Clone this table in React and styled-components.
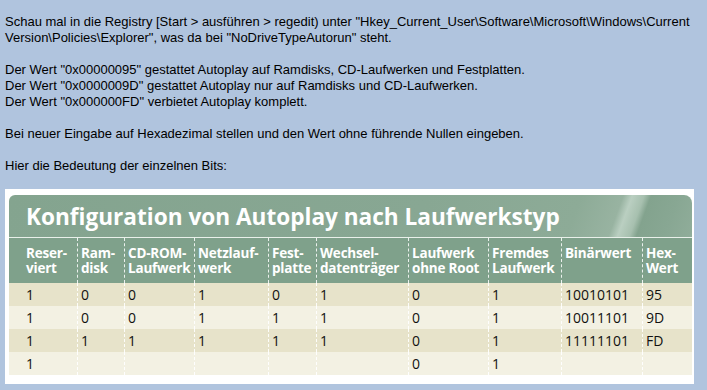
import React from 'react'
import styled, { createGlobalStyle } from 'styled-components'

const GlobalStyle = createGlobalStyle`
    body {
        margin: 0;
        background-color: #b0c4de;
        font-family: "Liberation Sans", Arial, sans-serif;
    }
`

const columns = [
    ['Reser-', 'viert'],
    ['Ram-', 'disk'],
    ['CD-ROM-', 'Laufwerk'],
    ['Netzlauf-', 'werk'],
    ['Fest-', 'platte'],
    ['Wechsel-', 'datenträger'],
    ['Laufwerk', 'ohne Root'],
    ['Fremdes', 'Laufwerk'],
    ['Binärwert', ''],
    ['Hex-', 'Wert'],
]

const rows = [
    ['1', '0', '0', '1', '0', '1', '0', '1', '10010101', '95'],
    ['1', '0', '0', '1', '1', '1', '0', '1', '10011101', '9D'],
    ['1', '1', '1', '1', '1', '1', '0', '1', '11111101', 'FD'],
    ['1', '', '', '', '', '', '0', '1', '', ''],
]

export default function App() {
    return (
        <Page>
            <GlobalStyle />
            <Paragraph>
                Schau mal in die Registry [Start &gt; ausführen &gt; regedit) unter "Hkey_Current_User\Software\Microsoft\Windows\Current
                <br />
                Version\Policies\Explorer", was da bei "NoDriveTypeAutorun" steht.
            </Paragraph>
            <Paragraph>
                Der Wert "0x00000095" gestattet Autoplay auf Ramdisks, CD-Laufwerken und Festplatten.
                <br />
                Der Wert "0x0000009D" gestattet Autoplay nur auf Ramdisks und CD-Laufwerken.
                <br />
                Der Wert "0x000000FD" verbietet Autoplay komplett.
            </Paragraph>
            <Paragraph>Bei neuer Eingabe auf Hexadezimal stellen und den Wert ohne führende Nullen eingeben.</Paragraph>
            <Paragraph>Hier die Bedeutung der einzelnen Bits:</Paragraph>

            <Frame>
                <Panel>
                    <Title>Konfiguration von Autoplay nach Laufwerkstyp</Title>
                    <Grid>
                        {columns.map((c, i) => (
                            <HeadCell key={i} $first={i === 0}>
                                <HeadLine>{c[0]}</HeadLine>
                                <HeadLine>{c[1]}</HeadLine>
                            </HeadCell>
                        ))}
                        {rows.map((r, ri) =>
                            r.map((v, ci) => (
                                <Cell key={ri + '-' + ci} $first={ci === 0} $alt={ri % 2 === 1}>
                                    {v}
                                </Cell>
                            ))
                        )}
                    </Grid>
                </Panel>
            </Frame>
        </Page>
    )
}

const Page = styled.div`
    padding: 14px 0 0 5px;
    width: 702px;
`

const Paragraph = styled.p`
    margin: 0 0 16px;
    font-size: 13px;
    line-height: 16px;
    color: #000;
    white-space: nowrap;
`

const Frame = styled.div`
    margin-top: -1px;
    width: 689px;
    box-sizing: border-box;
    padding: 6px 2px 9px 4px;
    background: #fff;
`

const Panel = styled.div`
    border-radius: 6px 8px 0 0;
    overflow: hidden;
    font-family: "Open Sans", "Noto Sans", sans-serif;
`

// Titelbalken mit dem hellen Lichtstreifen rechts
const Title = styled.div`
    height: 43px;
    box-sizing: border-box;
    padding: 7px 0 0 17px;
    border-bottom: 1px solid #e9f0ea;
    background: linear-gradient(
        110deg,
        #84a48f 0%,
        #88a793 60%,
        #8dab97 82%,
        #98b3a1 88%,
        #bacfc1 89.3%,
        #a7c0af 91%,
        #83a38e 92%,
        #88a793 96%,
        #90ad9a 100%
    );
    color: #fff;
    font-size: 22.6px;
    font-weight: 700;
    line-height: 30px;
`

const Grid = styled.div`
    display: grid;
    grid-template-columns: 68px 47px 70px 74px 48px 92px 80px 73px 81px 1fr;
`

const HeadCell = styled.div`
    height: 45px;
    box-sizing: border-box;
    padding: 8px 0 0 ${(p) => (p.$first ? '17px' : '3px')};
    background: #7fa18b;
    border-left: ${(p) => (p.$first ? 'none' : '1px dashed rgba(255, 255, 255, 0.85)')};
    color: #fff;
    font-size: 13.5px;
    font-weight: 700;
    letter-spacing: -0.2px;
    white-space: nowrap;
    overflow: hidden;
`

const HeadLine = styled.div`
    height: 15px;
    line-height: 15px;
`

const Cell = styled.div`
    height: 23px;
    box-sizing: border-box;
    padding: 3px 0 0 ${(p) => (p.$first ? '17px' : '3px')};
    background: ${(p) => (p.$alt ? '#f3f1e3' : '#e7e3ca')};
    border-left: ${(p) => (p.$first ? 'none' : '1px dashed rgba(255, 255, 255, 0.9)')};
    color: #111;
    font-size: 14px;
    line-height: 18px;
    white-space: nowrap;
`
